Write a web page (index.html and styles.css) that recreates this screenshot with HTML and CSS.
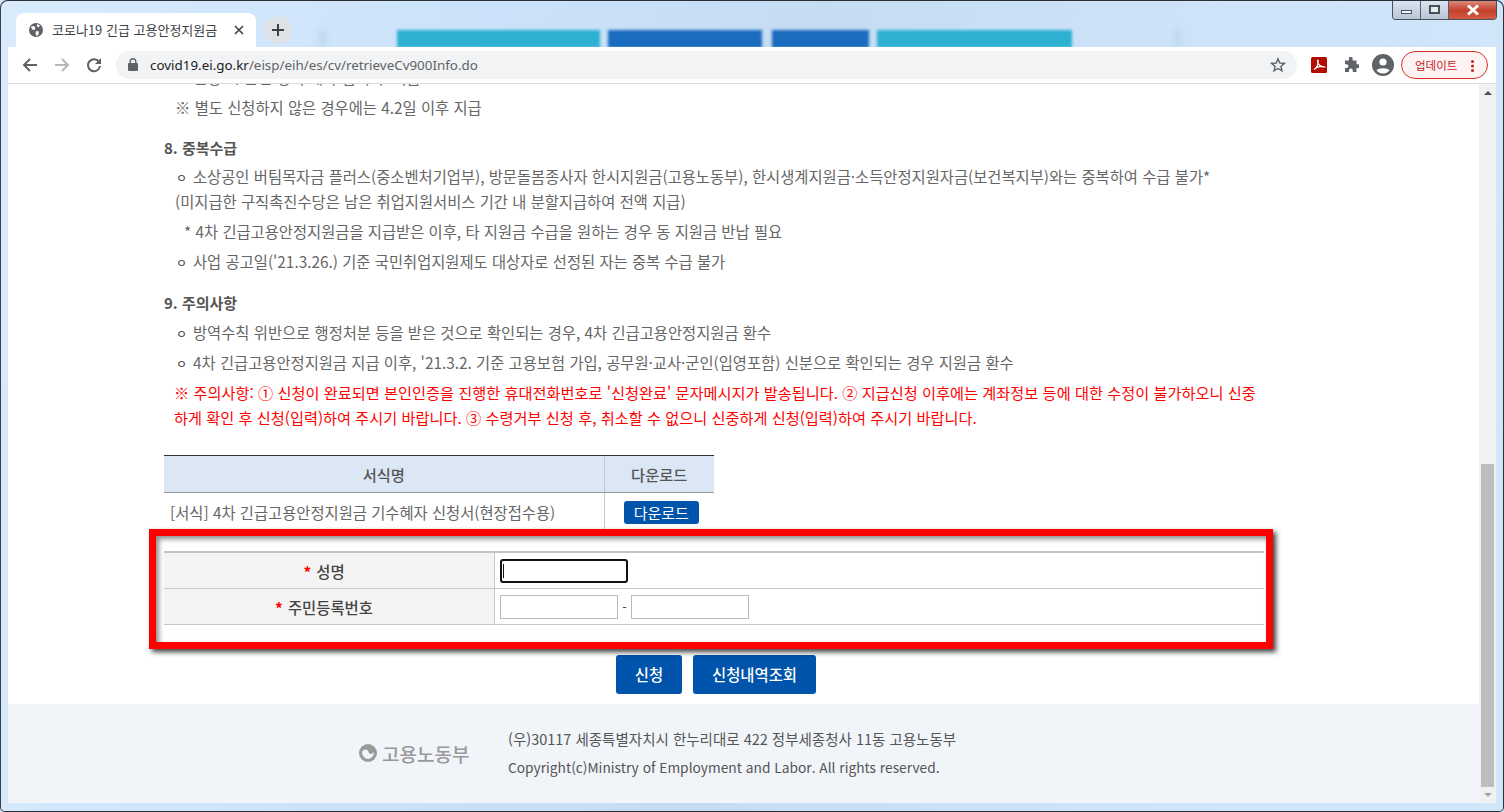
FILE: index.html
```html
<!DOCTYPE html>
<html lang="ko">
<head>
<meta charset="utf-8">
<title>코로나19 긴급 고용안정지원금</title>
<link rel="stylesheet" href="styles.css">
</head>
<body>
<div class="window">
  <div class="backdrop">
    <span class="streak s1"></span><span class="streak s2"></span>
    <span class="blk teal b1"></span><span class="blk blue b2"></span><span class="blk blue b3"></span><span class="blk teal b4"></span>
  </div>
  <div class="winctl">
    <span class="wc"><i class="minbar"></i></span>
    <span class="wc"><i class="maxbox"></i></span>
    <span class="wc close"><svg width="16" height="12" viewBox="0 0 16 12"><path d="M3 1.5 13 10.5M13 1.5 3 10.5" stroke="#fff" stroke-width="3" fill="none"/></svg></span>
  </div>
  <div class="tabstrip">
    <div class="tab">
      <svg class="globe" width="14" height="14" viewBox="0 0 14 14"><circle cx="7" cy="7" r="7" fill="#5f6368"/><path d="M2 3.5 5 3 6.5 5 5.5 7 3 6.5ZM8 1 11 2.5 9.5 4.5 8 3.5ZM7 8 10 8.5 9.5 11.5 7.5 13 6.5 10.5Z" fill="#fff"/></svg>
      <span class="tabtitle">코로나19 긴급 고용안정지원금</span>
      <svg class="tabx" width="10" height="10" viewBox="0 0 10 10"><path d="M1 1 9 9M9 1 1 9" stroke="#3c4043" stroke-width="1.6"/></svg>
    </div>
    <div class="newtab"><svg width="14" height="14" viewBox="0 0 14 14"><path d="M7 1V13M1 7H13" stroke="#3c4043" stroke-width="2"/></svg></div>
  </div>
  <div class="toolbar">
    <svg class="navicon" width="16" height="16" viewBox="0 0 16 16"><path d="M15 8H2M8 2 2 8 8 14" stroke="#5f6368" stroke-width="2" fill="none"/></svg>
    <svg class="navicon" width="16" height="16" viewBox="0 0 16 16"><path d="M1 8H14M8 2 14 8 8 14" stroke="#b4b7bb" stroke-width="2" fill="none"/></svg>
    <svg class="navicon" width="16" height="16" viewBox="0 0 16 16"><path d="M13.2 5.2A6 6 0 1 0 14 9" stroke="#5f6368" stroke-width="2" fill="none"/><path d="M15 1V7H9Z" fill="#5f6368"/></svg>
    <div class="omnibox">
      <svg width="10" height="13" viewBox="0 0 10 13"><rect x="0" y="5" width="10" height="8" rx="1" fill="#5f6368"/><path d="M2.2 5.5V3.6a2.8 2.8 0 0 1 5.6 0V5.5" stroke="#5f6368" stroke-width="1.4" fill="none"/></svg>
      <span class="url"><b>covid19.ei.go.kr</b>/eisp/eih/es/cv/retrieveCv900Info.do</span>
      <svg class="star" width="16" height="16" viewBox="0 0 16 16"><path d="M8 1.8 9.8 6 14.4 6.4 10.9 9.4 12 13.9 8 11.5 4 13.9 5.1 9.4 1.6 6.4 6.2 6Z" stroke="#5f6368" stroke-width="1.4" fill="none"/></svg>
    </div>
    <svg class="pdf" width="16" height="16" viewBox="0 0 16 16"><rect width="16" height="16" rx="1.5" fill="#b30b00"/><path d="M3 12.5C5 11.5 7 8 7.2 4 7.3 2.5 6.2 3 6.6 5 7 7.5 10 10 13 9.8 11 8.800 6 9.500 3 12.5Z" stroke="#fff" stroke-width="1.200" fill="none"/></svg>
    <svg class="puzzle" width="16" height="16" viewBox="0 0 16 16"><path d="M6 1.500a1.800 1.800 0 0 1 3.600 0V3.500H13.500V7.200H15a1.900 1.900 0 0 1 0 3.800H13.500V15H9.800V13.500a1.900 1.900 0 0 0-3.800 0V15H2V11H3.500a1.900 1.900 0 0 0 0-3.800H2V3.500H6Z" fill="#5f6368"/></svg>
    <svg class="avatar" width="22" height="22" viewBox="0 0 22 22"><circle cx="11" cy="11" r="11" fill="#5f6368"/><circle cx="11" cy="8" r="3.600" fill="#fff"/><path d="M4.500 16.500C6 13.500 16 13.500 17.500 16.500A8.500 8.500 0 0 1 4.500 16.500Z" fill="#fff"/></svg>
    <div class="update"><span>업데이트</span><i class="dots"></i></div>
  </div>
  <div class="viewport">
    <main class="page">
      <div class="content">
        <p class="line in1 clipped"><span class="bul">ㅇ</span>신청 시 본인 명의 계좌 입력 후 지급</p>
        <p class="line in1 gap">※ 별도 신청하지 않은 경우에는 4.2일 이후 지급</p>
        <h3 class="head">8. 중복수급</h3>
        <p class="line in1 first"><span class="bul">ㅇ</span>소상공인 버팀목자금 플러스(중소벤처기업부), 방문돌봄종사자 한시지원금(고용노동부), 한시생계지원금·소득안정지원자금(보건복지부)와는 중복하여 수급 불가*</p>
        <p class="line in1">(미지급한 구직촉진수당은 남은 취업지원서비스 기간 내 분할지급하여 전액 지급)</p>
        <p class="line in2 gap">* 4차 긴급고용안정지원금을 지급받은 이후, 타 지원금 수급을 원하는 경우 동 지원금 반납 필요</p>
        <p class="line in1 gap"><span class="bul">ㅇ</span>사업 공고일('21.3.26.) 기준 국민취업지원제도 대상자로 선정된 자는 중복 수급 불가</p>
        <h3 class="head next">9. 주의사항</h3>
        <p class="line in1 gap"><span class="bul">ㅇ</span>방역수칙 위반으로 행정처분 등을 받은 것으로 확인되는 경우, 4차 긴급고용안정지원금 환수</p>
        <p class="line in1 gap"><span class="bul">ㅇ</span>4차 긴급고용안정지원금 지급 이후, '21.3.2. 기준 고용보험 가입, 공무원·교사·군인(입영포함) 신분으로 확인되는 경우 지원금 환수</p>
        <p class="line in0 gap red">※ 주의사항: ① 신청이 완료되면 본인인증을 진행한 휴대전화번호로 '신청완료' 문자메시지가 발송됩니다. ② 지급신청 이후에는 계좌정보 등에 대한 수정이 불가하오니 신중</p>
        <p class="line in0 red">하게 확인 후 신청(입력)하여 주시기 바랍니다. ③ 수령거부 신청 후, 취소할 수 없으니 신중하게 신청(입력)하여 주시기 바랍니다.</p>

        <table class="dl">
          <thead><tr><th class="c1">서식명</th><th class="c2">다운로드</th></tr></thead>
          <tbody><tr><td class="c1">[서식] 4차 긴급고용안정지원금 기수혜자 신청서(현장접수용)</td><td class="c2"><a class="dlbtn">다운로드</a></td></tr></tbody>
        </table>

        <div class="highlight">
          <div class="form">
            <div class="row">
              <div class="lab"><em>*</em> 성명</div>
              <div class="val"><span class="focus"><input class="inp name" type="text" aria-label="성명"><i class="caret"></i></span></div>
            </div>
            <div class="row">
              <div class="lab"><em>*</em> 주민등록번호</div>
              <div class="val"><input class="inp rrn" type="text" aria-label="주민번호 앞자리"><span class="dash">-</span><input class="inp rrn" type="text" aria-label="주민번호 뒷자리"></div>
            </div>
          </div>
        </div>

        <div class="actions"><a class="btn apply">신청</a><a class="btn hist">신청내역조회</a></div>
      </div>
      <footer class="foot">
        <div class="logo">
          <svg width="18" height="18" viewBox="0 0 18 18"><circle cx="9" cy="9" r="9" fill="#9a9a9a"/><path d="M3 8C5 4.500 9 5 9.500 8 10 10.500 13.500 10.500 15 8 15 12 12 15 9 15 6 15 3 12 3 8Z" fill="#f1f4f9"/></svg>
          <span>고용노동부</span>
        </div>
        <div class="addr">
          <p>(우)30117 세종특별자치시 한누리대로 422 정부세종청사 11동 고용노동부</p>
          <p class="copy">Copyright(c)Ministry of Employment and Labor. All rights reserved.</p>
        </div>
      </footer>
    </main>
    <div class="scrollbar">
      <i class="arr up"></i>
      <div class="thumb"></div>
      <i class="arr down"></i>
    </div>
  </div>
</div>
</body>
</html>
```

FILE: styles.css
```css
* { box-sizing: border-box; }
html, body { margin: 0; height: 100%; overflow: hidden; background: #cfe4f9; }
body { font-family: "Noto Sans CJK KR", "Noto Sans", sans-serif; }
.window {
  position: relative; width: 1504px; height: 812px; overflow: hidden;
  display: flex; flex-direction: column; padding: 0 7px 8px 7px;
  background: linear-gradient(100deg, #d9ebfd 0%, #cbe2fa 30%, #c5dcf3 50%, #cfe4fa 75%, #d0e6fb 100%);
  border: 1px solid #2b2f36; border-radius: 8px 8px 5px 5px; border-left-color: #3a3f46;
}
.backdrop { position: absolute; inset: 0; pointer-events: none; }
.blk { position: absolute; top: 29px; height: 18px; filter: blur(1.5px); }
.teal { background: #2eb0d2; }
.blue { background: #1b6bbf; }
.b1 { left: 396px; width: 203px; }
.b2 { left: 607px; width: 154px; }
.b3 { left: 771px; width: 97px; }
.b4 { left: 876px; width: 195px; }
.streak { position: absolute; top: 28px; height: 19px; width: 7px; background: #bcd7f1; filter: blur(3px); }
.s1 { left: 318px; }
.s2 { left: 1173px; }

.winctl { position: absolute; top: -1px; right: 6px; display: flex; height: 20px; border: 1px solid #4a5058; border-top: 0; border-radius: 0 0 4px 4px; overflow: hidden; }
.wc { width: 28px; display: flex; align-items: center; justify-content: center; background: linear-gradient(#dbe6f1, #b7c6d6); border-right: 1px solid #59616b; }
.wc.close { width: 47px; border-right: 0; background: linear-gradient(#dc9083 0%, #c7402c 55%, #cf5a44 100%); }
.minbar { width: 11px; height: 4px; background: #f4f6f8; border: 1px solid #4a5058; margin-top: 5px; }
.maxbox { width: 11px; height: 9px; border: 2px solid #4a5058; background: #e6edf4; }

.tabstrip { position: relative; height: 46px; flex: none; display: flex; align-items: flex-end; padding-left: 8px; gap: 8px; }
.tab { width: 240px; height: 34px; background: #fff; border-radius: 8px 8px 0 0; display: flex; align-items: center; padding: 0 12px 1px 13px; color: #3c4043; }
.globe { flex: none; }
.tabtitle { font-size: 13px; margin-left: 9px; white-space: nowrap; flex: 1; }
.newtab { width: 28px; height: 28px; margin-bottom: 3px; border-radius: 50%; background: #dee1e6; display: flex; align-items: center; justify-content: center; }

.toolbar { position: relative; height: 37px; flex: none; background: #fff; border-bottom: 1px solid #dadce0; display: flex; align-items: center; padding: 0 8px 1px 14px; }
.navicon { flex: none; margin-right: 16px; }
.navicon:nth-child(3) { margin-right: 14px; }
.omnibox { flex: none; width: 1181px; height: 28px; border-radius: 14px; background: #f1f3f4; display: flex; align-items: center; padding: 0 11px 0 12px; }
.url { margin-left: 12px; font-size: 13.400px; color: #5f6368; font-family: "Noto Sans", sans-serif; }
.url b { font-weight: 400; color: #202124; }
.star { margin-left: auto; }
.pdf { margin-left: 14px; flex: none; }
.puzzle { margin-left: 16px; flex: none; }
.avatar { margin-left: 13px; flex: none; }
.update { flex: none; margin-left: 7px; width: 87px; height: 28px; border: 1px solid #d93025; border-radius: 14px; background: #fdf3f2; display: flex; align-items: center; padding-left: 13px; color: #c5221f; font-size: 11.500px; position: relative; }
.dots { position: absolute; right: 13px; top: 8px; width: 3px; height: 3px; border-radius: 50%; background: #c5221f; box-shadow: 0 4.500px 0 #c5221f, 0 9px 0 #c5221f; }

.viewport { flex: 1; min-height: 0; display: flex; }
.page { flex: 1; min-width: 0; background: #fff; overflow: hidden; display: flex; flex-direction: column; }
.scrollbar { width: 17px; flex: none; background: #f1f1f1; position: relative; display: flex; flex-direction: column; align-items: center; padding-top: 380px; }
.thumb { width: 13px; height: 323px; background: #bebebe; }
.arr { position: absolute; left: 5px; width: 0; height: 0; border-left: 4px solid transparent; border-right: 4px solid transparent; }
.arr.up { top: 7px; border-bottom: 4px solid #505050; }
.arr.down { bottom: 6px; border-top: 4px solid #a3a3a3; }

.content { flex: 1; padding-left: 156px; margin-top: -19px; color: #666; font-size: 15.350px; }
.line { margin: 0; line-height: 25px; height: 25px; white-space: nowrap; }
.in0 { padding-left: 10px; }
.in1 { padding-left: 11px; }
.in2 { padding-left: 20px; }
.gap { margin-top: 5px; }
.first { margin-top: 4px; }
.bul { display: inline-block; width: 18px; font-size: 12px; font-weight: 500; text-align: left; padding-left: 1px; color: #555; }
.head { margin: 15px 0 0; font-size: 15px; line-height: 25px; height: 25px; font-weight: 700; color: #555; }
.head.next { margin-top: 16px; }
.red { color: #f00; font-size: 15.230px; }

.dl { margin-top: 25px; width: 550px; height: 75px; border-collapse: collapse; table-layout: fixed; }
.dl th { height: 37px; padding: 0; background: #dce7f6; border-top: 1px solid #333; border-bottom: 1px solid #999; font-size: 15.300px; font-weight: 500; color: #555; text-align: center; }
.dl td { padding: 0; height: 37px; }
.dl .c1 { width: 440px; }
.dl .c2 { border-left: 1px solid #c8c8c8; text-align: center; }
.dl td.c1 { padding-left: 6px; white-space: nowrap; }
.dlbtn { display: inline-block; width: 75px; height: 23px; margin-left: 4px; line-height: 23px; background: #0054ab; color: #fff; border-radius: 3px; font-size: 15px; text-align: center; vertical-align: middle; }

.highlight { position: relative; margin: -1px 0 0 -15px; width: 1124px; height: 120px; border: 7px solid #f00; box-shadow: 3px 3px 5px rgba(0,0,0,.75), inset 3px 3px 5px rgba(0,0,0,.45); padding: 15px 2px 0 8px; background: #fff; }
.form { border-top: 2px solid #c4c4c4; }
.row { display: flex; height: 36px; border-bottom: 1px solid #c8c8c8; }
.lab { width: 331px; padding-right: 10px; background: #f4f4f4; border-right: 1px solid #c8c8c8; display: flex; align-items: center; justify-content: center; gap: 5px; font-size: 15.400px; font-weight: 500; color: #444; }
.lab em { font-style: normal; color: #f00; font-weight: 700; }
.val { flex: 1; padding-left: 5px; display: flex; align-items: center; }
.inp { display: block; height: 24px; padding: 0; margin: 0; background: #fff; border: 1px solid #bbb; outline: none; }
.inp.rrn { width: 118px; }
.inp.name { width: 128px; border: 2px solid #111; border-radius: 3px; }
.focus { position: relative; display: block; }
.caret { position: absolute; left: 3px; top: 5px; width: 1px; height: 14px; background: #111; }
.dash { width: 13px; text-align: center; font-size: 13px; color: #444; }

.actions { display: flex; justify-content: center; gap: 11px; margin: 6px 0 0; padding-left: 4px; width: 1100px; }
.btn { height: 39px; line-height: 38px; background: #0054ab; color: #fff; border-radius: 3px; font-size: 15.400px; font-weight: 500; text-align: center; }
.apply { width: 66px; }
.hist { width: 123px; }

.foot { flex: none; height: 99px; background: #f1f4f9; display: flex; padding-left: 351px; }
.logo { display: flex; align-items: center; gap: 5px; color: #999; font-size: 19px; width: 149px; margin-top: -1px; font-weight: 500; }
.addr { padding-top: 22px; color: #555; font-size: 14.500px; }
.addr p { margin: 0; line-height: 25px; height: 29px; white-space: nowrap; }
.addr .copy { font-size: 13.750px; }
```
